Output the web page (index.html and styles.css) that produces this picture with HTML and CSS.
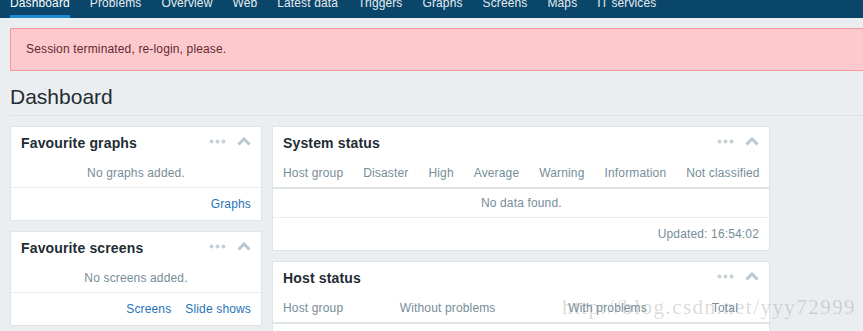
FILE: index.html
```html
<!DOCTYPE html>
<html lang="en">
<head>
    <meta charset="UTF-8">
    <title>Dashboard</title>
    <link rel="stylesheet" href="styles.css">
</head>
<body>

    <!-- Top menu -->
    <nav class="top-nav">
        <ul class="top-nav-list">
            <li><a href="#" class="selected">Dashboard</a></li>
            <li><a href="#">Problems</a></li>
            <li><a href="#">Overview</a></li>
            <li><a href="#">Web</a></li>
            <li><a href="#">Latest data</a></li>
            <li><a href="#">Triggers</a></li>
            <li><a href="#">Graphs</a></li>
            <li><a href="#">Screens</a></li>
            <li><a href="#">Maps</a></li>
            <li><a href="#">IT services</a></li>
        </ul>
    </nav>

    <main class="page">
        <div class="msg-bad">Session terminated, re-login, please.</div>

        <h1 class="page-title">Dashboard</h1>

        <div class="dashboard">
            <!-- Left column -->
            <div class="column column-left">
                <div class="widget">
                    <div class="widget-head">
                        <h4>Favourite graphs</h4>
                        <span class="widget-tools">
                            <svg class="icon-dots" width="17" height="5" viewBox="0 0 17 5"><circle cx="2.5" cy="2.5" r="2"/><circle cx="8.5" cy="2.5" r="2"/><circle cx="14.5" cy="2.5" r="2"/></svg>
                            <svg class="icon-collapse" width="14" height="9" viewBox="0 0 14 9"><path d="M1.5 7.5 L7 2 L12.5 7.5"/></svg>
                        </span>
                    </div>
                    <div class="widget-empty">No graphs added.</div>
                    <div class="widget-foot"><a href="#">Graphs</a></div>
                </div>

                <div class="widget">
                    <div class="widget-head">
                        <h4>Favourite screens</h4>
                        <span class="widget-tools">
                            <svg class="icon-dots" width="17" height="5" viewBox="0 0 17 5"><circle cx="2.5" cy="2.5" r="2"/><circle cx="8.5" cy="2.5" r="2"/><circle cx="14.5" cy="2.5" r="2"/></svg>
                            <svg class="icon-collapse" width="14" height="9" viewBox="0 0 14 9"><path d="M1.5 7.5 L7 2 L12.5 7.5"/></svg>
                        </span>
                    </div>
                    <div class="widget-empty">No screens added.</div>
                    <div class="widget-foot"><a href="#">Screens</a><a href="#">Slide shows</a></div>
                </div>
            </div>

            <!-- Right column -->
            <div class="column column-right">
                <div class="widget">
                    <div class="widget-head">
                        <h4>System status</h4>
                        <span class="widget-tools">
                            <svg class="icon-dots" width="17" height="5" viewBox="0 0 17 5"><circle cx="2.5" cy="2.5" r="2"/><circle cx="8.5" cy="2.5" r="2"/><circle cx="14.5" cy="2.5" r="2"/></svg>
                            <svg class="icon-collapse" width="14" height="9" viewBox="0 0 14 9"><path d="M1.5 7.5 L7 2 L12.5 7.5"/></svg>
                        </span>
                    </div>
                    <table class="list-table">
                        <thead>
                            <tr>
                                <th>Host group</th>
                                <th>Disaster</th>
                                <th>High</th>
                                <th>Average</th>
                                <th>Warning</th>
                                <th>Information</th>
                                <th>Not classified</th>
                            </tr>
                        </thead>
                        <tbody>
                            <tr><td colspan="7" class="no-data">No data found.</td></tr>
                        </tbody>
                    </table>
                    <div class="widget-foot updated">Updated: 16:54:02</div>
                </div>

                <div class="widget">
                    <div class="widget-head">
                        <h4>Host status</h4>
                        <span class="widget-tools">
                            <svg class="icon-dots" width="17" height="5" viewBox="0 0 17 5"><circle cx="2.5" cy="2.5" r="2"/><circle cx="8.5" cy="2.5" r="2"/><circle cx="14.5" cy="2.5" r="2"/></svg>
                            <svg class="icon-collapse" width="14" height="9" viewBox="0 0 14 9"><path d="M1.5 7.5 L7 2 L12.5 7.5"/></svg>
                        </span>
                    </div>
                    <table class="list-table">
                        <thead>
                            <tr>
                                <th>Host group</th>
                                <th>Without problems</th>
                                <th>With problems</th>
                                <th>Total</th>
                            </tr>
                        </thead>
                        <tbody>
                            <tr><td colspan="4" class="no-data">No data found.</td></tr>
                        </tbody>
                    </table>
                </div>
            </div>
        </div>
    </main>

    <!-- Blog watermark over the screenshot -->
    <div class="watermark">http://blog.csdn.net/yyy72999</div>

</body>
</html>
```

FILE: styles.css
```css
/* General styles */
body {
    font-family: "Liberation Sans", Arial, sans-serif;
    font-size: 12px;
    letter-spacing: 0.15px;
    margin: 0;
    padding: 0;
    background-color: #ebeef0;
    color: #1f2c33;
    overflow: hidden;
}

a {
    text-decoration: none;
}

/* Top menu */
.top-nav {
    height: 18px;
    overflow: hidden;
    background-color: #0a466a;
}

.top-nav-list {
    display: flex;
    gap: 20px;
    list-style: none;
    margin: -4px 0 0;
    padding: 0 0 0 10px;
}

.top-nav-list a {
    display: block;
    line-height: 14px;
    padding-bottom: 5px;
    border-bottom: 3px solid transparent;
    color: #e4ebf0;
    letter-spacing: 0.12px;
    white-space: nowrap;
}

.top-nav-list a.selected {
    color: #fff;
    border-bottom-color: #1d8ad2;
}

/* Page */
.page {
    padding: 10px 0 0 10px;
}

.msg-bad {
    background-color: #fec9cd;
    border: 1px solid #f2989e;
    border-right: none;
    color: #5f2a31;
    line-height: 15px;
    padding: 13px 15px;
}

.page-title {
    font-size: 21px;
    font-weight: normal;
    letter-spacing: 0;
    line-height: 24px;
    margin: 14px 0 0;
    padding-bottom: 6px;
    border-bottom: 1px solid #dde2e5;
}

/* Dashboard grid */
.dashboard {
    display: grid;
    grid-template-columns: 252px 498px;
    gap: 10px;
    margin-top: 10px;
}

.column {
    display: flex;
    flex-direction: column;
    gap: 10px;
}

.widget {
    background-color: #fff;
    border: 1px solid #dfe4e7;
}

.widget-head {
    display: flex;
    align-items: center;
    height: 32px;
    padding: 0 10px;
}

.widget-head h4 {
    flex: 1;
    margin: 0;
    font-size: 14px;
    font-weight: bold;
    color: #1f2c33;
}

.widget-tools {
    display: flex;
    align-items: center;
    gap: 11px;
    margin-top: -4px;
}

.icon-dots {
    fill: #c7d0d5;
}

.icon-collapse {
    fill: none;
    stroke: #bac7ce;
    stroke-width: 3;
}

.widget-empty {
    height: 28px;
    line-height: 28px;
    text-align: center;
    color: #768d99;
    border-bottom: 1px solid #ebeef0;
}

.widget-foot {
    display: flex;
    justify-content: flex-end;
    gap: 14px;
    height: 32px;
    line-height: 32px;
    padding: 0 10px;
}

.widget-foot a {
    color: #1f74b8;
}

.widget-foot.updated {
    color: #768d99;
}

/* Tables */
.list-table {
    width: 100%;
    border-collapse: collapse;
}

.list-table th {
    height: 28px;
    padding: 0 10px;
    text-align: left;
    font-weight: normal;
    color: #768d99;
    white-space: nowrap;
    border-bottom: 2px solid #dfe4e7;
}

.list-table td {
    height: 28px;
    padding: 0 10px;
    border-bottom: 1px solid #ebeef0;
}

.list-table .no-data {
    text-align: center;
    color: #768d99;
}

/* Watermark */
.watermark {
    position: absolute;
    left: 562px;
    top: 295px;
    font-family: "Liberation Serif", serif;
    font-size: 21px;
    letter-spacing: 1.45px;
    color: rgba(140, 140, 140, 0.32);
    pointer-events: none;
}
```
